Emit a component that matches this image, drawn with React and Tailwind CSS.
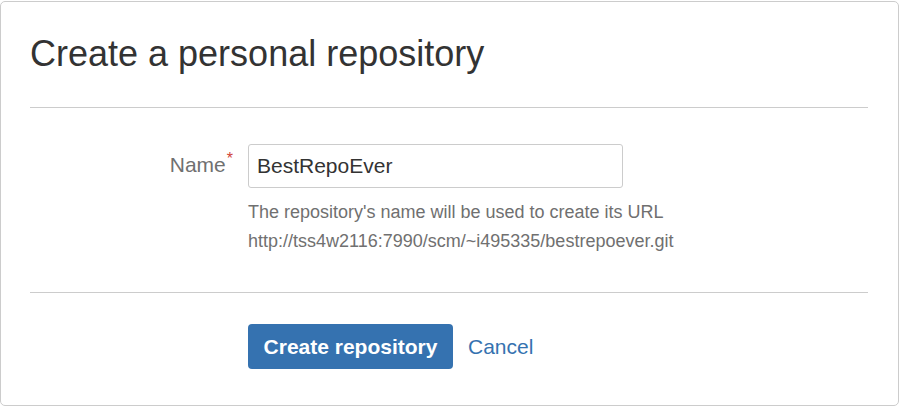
import React from "react";

const App = () => {
  return (
    <div className="w-[900px] h-[408px] bg-white pt-px font-['Liberation_Sans',Arial,sans-serif]">
      <div className="w-[899px] h-[405px] border border-[#cccccc] rounded-[5px] bg-white">
        <div className="ml-[29px] mr-[30px] pt-[30px] pb-[31px] border-b border-[#cccccc]">
          <h2 className="text-[36px] leading-[44px] text-[#333333] font-normal">
            Create a personal repository
          </h2>
        </div>

        <div className="ml-[29px] mr-[30px] pt-[36px] pb-[36px] border-b border-[#cccccc]">
          <div className="flex items-center gap-[15px]">
            <label className="w-[203px] text-right text-[21px] leading-[24px] text-[#707070]">
              Name
              <span className="relative -top-[8px] ml-px text-[16px] text-[#d04437]">*</span>
            </label>
            <div className="w-[375px] h-[44px] border border-[#cccccc] rounded-[3px] flex items-center pl-[8px] text-[21px] text-[#333333]">
              BestRepoEver
            </div>
          </div>
          <div className="ml-[218px] mt-[10px] text-[18px] leading-[29px] text-[#707070]">
            <p>The repository's name will be used to create its URL</p>
            <p>http://tss4w2116:7990/scm/~i495335/bestrepoever.git</p>
          </div>
        </div>

        <div className="ml-[247px] pt-[31px] flex items-center gap-[15px]">
          <button
            type="button"
            className="w-[205px] h-[45px] rounded-[4px] bg-[#3572b0] text-white text-[21px] font-bold"
          >
            Create repository
          </button>
          <a className="text-[21px] text-[#3572b0]">Cancel</a>
        </div>
      </div>
    </div>
  );
};

export default App;
